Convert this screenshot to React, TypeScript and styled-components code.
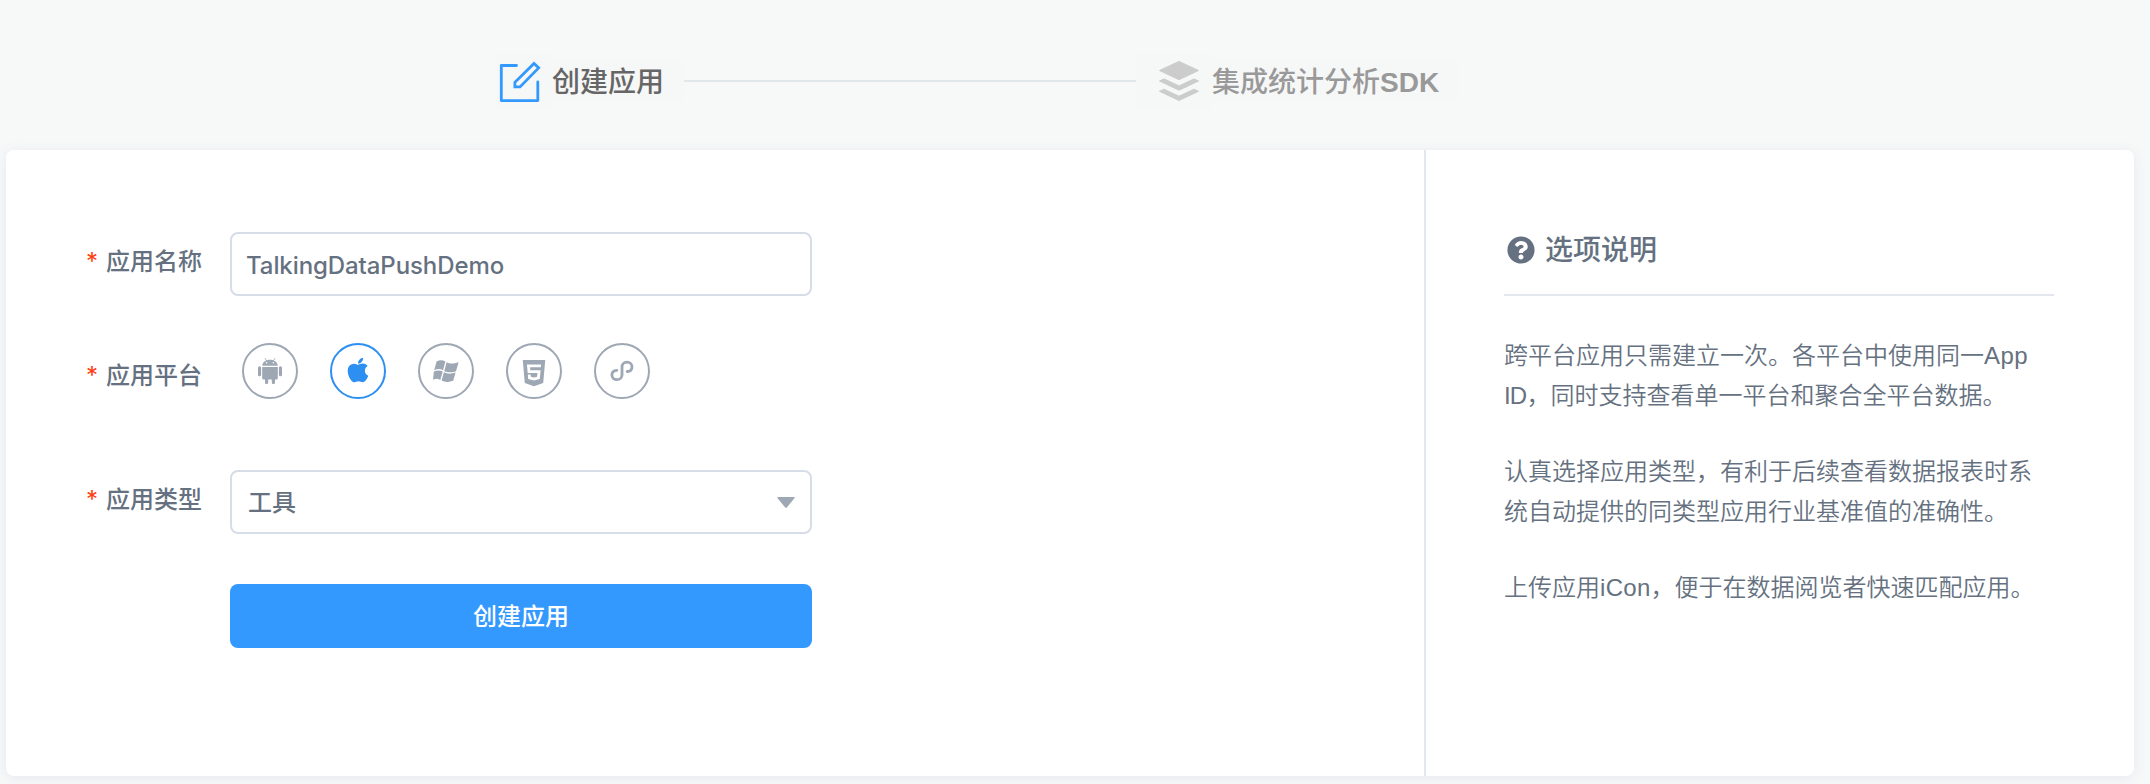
import React, { useState } from 'react';
import styled, { createGlobalStyle } from 'styled-components';
import { FaApple, FaHtml5, FaQuestionCircle } from 'react-icons/fa';

const GlobalStyle = createGlobalStyle`
  * { box-sizing: border-box; }
  body {
    margin: 0;
    background: #f7f9f9;
    color: #657180;
    font-family: "Liberation Sans", "Noto Sans CJK SC", sans-serif;
  }
`;

const Page = styled.div`
  min-height: 784px;
  padding: 54px 16px 8px 6px;
`;

const Steps = styled.header`
  display: flex;
  align-items: flex-start;
  height: 96px;
  padding-left: 490px;
`;

const StepIcon = styled.svg`
  flex: none;
  height: 56px;
  background: #f6f7f7;
`;

const StepTitle = styled.div<{ $width: number; $color: string }>`
  width: ${(p) => p.$width}px;
  height: 42px;
  margin-top: 6px;
  padding-top: 3px;
  background: #f6f7f7;
  color: ${(p) => p.$color};
  font-size: 28px;
  font-weight: 500;
  line-height: 40px;
  white-space: nowrap;

  b { font-weight: 700; }
`;

const StepLine = styled.div`
  width: 452px;
  height: 2px;
  margin-top: 26px;
  background: #e1e8ec;
`;

const Card = styled.main`
  display: flex;
  height: 626px;
  border-radius: 8px;
  background: #fff;
  box-shadow: 0 2px 14px rgba(40, 60, 110, 0.09);
`;

const Form = styled.form`
  width: 1418px;
  padding: 82px 0 0 80px;
`;

const Field = styled.div<{ $gap: number }>`
  display: flex;
  height: 64px;
  margin-bottom: ${(p) => p.$gap}px;
`;

const Label = styled.label<{ $top: number }>`
  display: flex;
  width: 144px;
  padding-top: ${(p) => p.$top}px;
  font-size: 24px;
  font-weight: 500;
  line-height: 36px;
`;

const Star = styled.span`
  width: 20px;
  color: #ff3d14;
  font-family: Inter, sans-serif;
  font-weight: 400;
`;

const TextInput = styled.input`
  width: 582px;
  height: 64px;
  padding: 2px 14px 0;
  border: 2px solid #d7dde7;
  border-radius: 8px;
  outline: none;
  background: #fff;
  color: #657180;
  font: 500 24px Inter, sans-serif;
  letter-spacing: -0.08px;
`;

const Platforms = styled.div`
  display: flex;
  gap: 32px;
  padding: 3px 0 0 12px;
`;

const Platform = styled.button<{ $active: boolean }>`
  display: flex;
  align-items: center;
  justify-content: center;
  width: 56px;
  height: 56px;
  padding: 0;
  border: 2px solid ${(p) => (p.$active ? '#2d8ff2' : '#9ea7b4')};
  border-radius: 50%;
  background: #fff;
  color: ${(p) => (p.$active ? '#2d8ff2' : '#9ea7b4')};
`;

const AppleIcon = styled(FaApple)`
  margin-bottom: 2px;
`;

const Html5Icon = styled(FaHtml5)`
  margin-top: 4px;
`;

const Select = styled.div`
  display: flex;
  align-items: center;
  justify-content: space-between;
  width: 582px;
  height: 64px;
  padding: 0 15px 0 16px;
  border: 2px solid #d7dde7;
  border-radius: 8px;
  font-size: 24px;
  font-weight: 500;

  span { padding-bottom: 4px; }
`;

const Submit = styled.button`
  width: 582px;
  height: 64px;
  margin-left: 144px;
  padding: 0 0 3px;
  border: 0;
  border-radius: 8px;
  background: #3399ff;
  color: #fff;
  font: 500 24px "Liberation Sans", "Noto Sans CJK SC", sans-serif;
`;

const Aside = styled.aside`
  flex: 1;
  padding: 80px 80px 0 78px;
  border-left: 2px solid #e3e8ee;
`;

const AsideTitle = styled.h2`
  display: flex;
  align-items: center;
  gap: 10px;
  height: 66px;
  margin: 0 0 40px;
  padding: 0 0 24px 3px;
  border-bottom: 2px solid #e3e8ee;
  font-size: 28px;
  font-weight: 500;
  line-height: 40px;

  span { padding-top: 1px; }
`;

const Note = styled.p`
  margin: 0 0 36px;
  font-size: 24px;
  font-weight: 350;
  line-height: 40px;
  white-space: nowrap;
`;

const Latin = styled.span<{ $spacing?: number }>`
  letter-spacing: ${(p) => p.$spacing ?? 0}px;
`;

const AndroidIcon = () => (
  <svg width="24" height="26" viewBox="0 0 24 26" fill="currentColor">
    <path d="M7 .4L8.600 2.800M17 .4L15.400 2.800" stroke="currentColor" strokeWidth=".8" strokeLinecap="round" />
    <path fillRule="evenodd" d="M4.200 7.800C4.400 4.200 7.600 1.700 12 1.700S19.600 4.200 19.800 7.800ZM8.600 4A.8.8 0 1 0 8.600 5.600A.8.8 0 0 0 8.600 4ZM15.400 4A.8.8 0 1 0 15.400 5.600A.8.8 0 0 0 15.400 4Z" />
    <path d="M4.200 8.900H19.800V20Q19.800 21.500 18.300 21.500H17V24.500A1.600 1.600 0 0 1 13.800 24.500V21.500H10.200V24.500A1.600 1.600 0 0 1 7 24.500V21.500H5.700Q4.200 21.500 4.200 20Z" />
    <rect x="0" y="8.200" width="3.100" height="10" rx="1.500" />
    <rect x="20.900" y="8.200" width="3.100" height="10" rx="1.500" />
  </svg>
);

const WindowsIcon = () => (
  <svg width="26" height="22" viewBox="0 0 26 22" fill="currentColor">
    <path d="M3.600 1.600C6.700-.2 9.600 0 12.400 1.600L10 10.200C7.200 8.700 4.300 8.700 1.200 10.300Z" />
    <path d="M13.600 2.200C16.500 3.800 20.300 4.100 25.600 2.200L23 11.200C18.600 12.900 14.700 12.700 11.300 10.900Z" />
    <path d="M.9 11.500C4 10 6.900 10 9.700 11.500L7.300 19.900C4.600 18.300 2.900 18.400 0 19.700Z" />
    <path d="M10.900 12.200C14.300 14 18.200 14.100 22.600 12.500L20.200 20.800C15.600 22.500 11.700 22.400 8.600 20.500Z" />
  </svg>
);

const MiniProgramIcon = () => (
  <svg width="24" height="22" viewBox="0 0 24 22" fill="none" stroke="currentColor" strokeWidth="2.800" strokeLinecap="round">
    <path d="M6.800 10.300C3.800 10.500 1.900 12.400 1.900 15C1.900 17.700 4.200 19.700 6.900 19.700C9.800 19.700 12 17.600 12 14.900V7C12 4.300 14.200 2.200 17 2.200C19.800 2.200 22 4.200 22 6.900C22 9.500 20 11.300 17.200 11.500" />
  </svg>
);

const platforms = [
  { name: 'android', icon: <AndroidIcon /> },
  { name: 'ios', icon: <AppleIcon size={28} /> },
  { name: 'windows', icon: <WindowsIcon /> },
  { name: 'html5', icon: <Html5Icon size={30} /> },
  { name: 'mini', icon: <MiniProgramIcon /> },
];

export default function App() {
  const [name, setName] = useState('TalkingDataPushDemo');
  const [platform, setPlatform] = useState('ios');

  return (
    <Page>
      <GlobalStyle />
      <Steps>
        <StepIcon width="56" viewBox="0 0 56 56" fill="none" stroke="#3399ff" strokeWidth="2.800" strokeLinecap="round" strokeLinejoin="round">
          <path d="M20.500 11.500H5.300V46.600H41.800V28" />
          <path d="M18.900 32.900V28.300L38 9.400L42.700 13.900L24 32.900Z" strokeLinejoin="miter" />
        </StepIcon>
        <StepTitle $width={132} $color="#666">创建应用</StepTitle>
        <StepLine />
        <StepIcon width="76" viewBox="0 0 76 56" fill="#ccc" stroke="#ccc" strokeWidth="1" strokeLinejoin="round">
          <path d="M43 7.400L62.500 16.500L43 25.700L23.500 16.500Z" />
          <path d="M23.500 27L28 24.900L43 31.900L58 24.900L62.500 27L43 36.200Z" />
          <path d="M23.500 37.300L28 35.200L43 42.200L58 35.200L62.500 37.300L43 46.500Z" />
        </StepIcon>
        <StepTitle $width={246} $color="#999">集成统计分析<b>SDK</b></StepTitle>
      </Steps>
      <Card>
        <Form onSubmit={(e) => e.preventDefault()}>
          <Field $gap={44}>
            <Label $top={12}><Star>*</Star>应用名称</Label>
            <TextInput value={name} onChange={(e) => setName(e.target.value)} />
          </Field>
          <Field $gap={66}>
            <Label $top={18}><Star>*</Star>应用平台</Label>
            <Platforms>
              {platforms.map((p) => (
                <Platform key={p.name} type="button" $active={p.name === platform} onClick={() => setPlatform(p.name)}>
                  {p.icon}
                </Platform>
              ))}
            </Platforms>
          </Field>
          <Field $gap={50}>
            <Label $top={12}><Star>*</Star>应用类型</Label>
            <Select>
              <span>工具</span>
              <svg width="18" height="11" viewBox="0 0 18 11" fill="#9ea7b4">
                <path d="M1 0H17Q18 0 17.600 1L9.800 10.400Q9 11.200 8.200 10.400L.4 1Q0 0 1 0Z" />
              </svg>
            </Select>
          </Field>
          <Submit>创建应用</Submit>
        </Form>
        <Aside>
          <AsideTitle><FaQuestionCircle size={28} /><span>选项说明</span></AsideTitle>
          <Note>跨平台应用只需建立一次。各平台中使用同一<Latin $spacing={0.4}>App</Latin><br /><Latin $spacing={-0.8}>ID</Latin>，同时支持查看单一平台和聚合全平台数据。</Note>
          <Note>认真选择应用类型，有利于后续查看数据报表时系<br />统自动提供的同类型应用行业基准值的准确性。</Note>
          <Note>上传应用<Latin $spacing={0.3}>iCon</Latin>，便于在数据阅览者快速匹配应用。</Note>
        </Aside>
      </Card>
    </Page>
  );
}
